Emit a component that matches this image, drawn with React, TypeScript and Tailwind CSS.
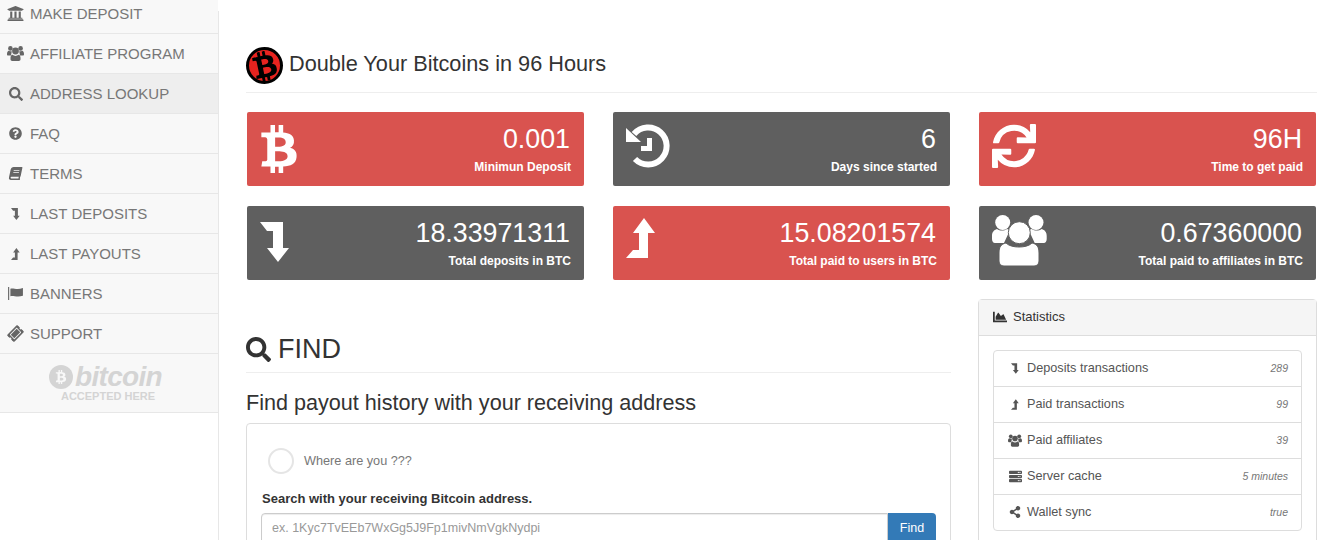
import type { ReactNode } from "react";
import {
  FaBtc,
  FaBook,
  FaChartArea,
  FaQuestionCircle,
  FaSearch,
  FaServer,
  FaShareAlt,
  FaSync,
  FaTicketAlt,
  FaUniversity,
} from "react-icons/fa";

function LevelDown({ className }: { className?: string }) {
  return (
    <svg viewBox="0 0 30 40" fill="currentColor" className={className}>
      <polygon points="0,0 23,0 23,26 29,26 18,40 7,26 13,26 13,9 7,9" />
    </svg>
  );
}

function LevelUp({ className }: { className?: string }) {
  return (
    <svg viewBox="0 0 30 40" fill="currentColor" className={className}>
      <polygon points="0,40 22,40 22,15 29,15 18,0 7,15 13,15 13,32 7,32" />
    </svg>
  );
}

function HistoryIcon({ className }: { className?: string }) {
  return (
    <svg viewBox="0 0 44 44" className={className}>
      <path d="M8 10A18.5 18.5 0 1 1 9 35" fill="none" stroke="currentColor" strokeWidth="6" />
      <polygon points="0,4 0,18 15,18" fill="currentColor" />
      <path d="M21 14h5v13H15v-5h6z" fill="currentColor" />
    </svg>
  );
}

function BigUsers({ className }: { className?: string }) {
  return (
    <svg viewBox="0 0 55 52" fill="currentColor" className={className}>
      <circle cx="10.7" cy="7.5" r="7.5" />
      <circle cx="44" cy="7.5" r="7.5" />
      <path d="M0 21c0-4 2-6 5-7 3 2 7 2 10 0l3 1-6 13H3c-2 0-3-2-3-4zM54.7 21c0-4-2-6-5-7-3 2-7 2-10 0l-3 1 6 13h9c2 0 3-2 3-4z" />
      <circle cx="27.3" cy="17.7" r="11" stroke="#5f5f5f" strokeWidth="1" />
      <path d="M7 38c0-6 2-9 7-10 3 3 8 4 13 4s10-1 13-4c5 1 7 4 7 10v8c0 3-2 5-5 5H12c-3 0-5-2-5-5z" stroke="#5f5f5f" strokeWidth="1" />
    </svg>
  );
}

function SmallUsers({ className }: { className?: string }) {
  return (
    <svg viewBox="0 0 17 15" fill="currentColor" className={className}>
      <circle cx="3.4" cy="2.4" r="2.3" />
      <circle cx="13.6" cy="2.4" r="2.3" />
      <path d="M0 8c0-2 .8-3 2-3.200 1 .6 2 .6 2.800.4L4 9.500H1C.4 9.500 0 9 0 8.500zM17 8c0-2-.8-3-2-3.200-1 .6-2 .6-2.800.4L13 9.500h3c.6 0 1-.5 1-1z" />
      <circle cx="8.500" cy="5" r="3.400" />
      <path d="M3.500 12c0-2 .7-3 2-3.200.9.8 1.900 1.100 3 1.100s2.100-.3 3-1.100c1.300.2 2 1.200 2 3.200v1.300c0 1-.7 1.700-1.700 1.700H5.200c-1 0-1.700-.7-1.700-1.700z" />
    </svg>
  );
}

function FlagIcon({ className }: { className?: string }) {
  return (
    <svg viewBox="0 0 16 14" fill="currentColor" className={className}>
      <rect x="0" y="0" width="1.200" height="14" />
      <path d="M2.500 2C5 .5 9 3.500 16 1.200V9.500C9 11.500 5 8.500 2.500 10z" />
    </svg>
  );
}

const navItems: { label: string; icon: ReactNode; active?: boolean }[] = [
  { label: "MAKE DEPOSIT", icon: <FaUniversity className="h-[17px] w-[17px]" /> },
  { label: "AFFILIATE PROGRAM", icon: <SmallUsers className="h-[15px] w-[17px]" /> },
  { label: "ADDRESS LOOKUP", icon: <FaSearch className="h-[14px] w-[14px]" />, active: true },
  { label: "FAQ", icon: <FaQuestionCircle className="h-[13px] w-[13px]" /> },
  { label: "TERMS", icon: <FaBook className="h-[13px] w-[13px] -skew-x-12" /> },
  { label: "LAST DEPOSITS", icon: <LevelDown className="h-[12px] w-[9px]" /> },
  { label: "LAST PAYOUTS", icon: <LevelUp className="h-[12px] w-[9px]" /> },
  { label: "BANNERS", icon: <FlagIcon className="h-[13px] w-[15px]" /> },
  { label: "SUPPORT", icon: <FaTicketAlt className="h-[15px] w-[15px] -rotate-45" /> },
];

function Sidebar() {
  return (
    <nav className="w-[218px] shrink-0 self-start bg-[#f8f8f8] text-[#777]">
      <ul className="-mt-[6px]">
        {navItems.map((item) => (
          <li
            key={item.label}
            className={`flex h-10 items-center border-b border-[#e7e7e7] pl-[7px] text-[15px] ${
              item.active ? "bg-[#eeeeee]" : ""
            }`}
          >
            <span className="mr-[6px] flex w-[17px] justify-center text-[#666]">{item.icon}</span>
            <span className="pt-px">{item.label}</span>
          </li>
        ))}
      </ul>
      <div className="flex h-[59px] flex-col items-center border-b border-[#e7e7e7] text-[#d4d4d4]">
        <div className="flex h-[34px] items-center pt-[11px] pr-[7px]">
          <span className="mr-[2px] flex h-[24px] w-[24px] items-center justify-center rounded-full bg-[#d4d4d4] text-[#f8f8f8]">
            <FaBtc className="h-[14px] w-[14px]" />
          </span>
          <span className="text-[28px] leading-none font-bold italic tracking-tight">bitcoin</span>
        </div>
        <span className="mt-[3px] pr-[2px] text-[11px] leading-none font-bold">ACCEPTED HERE</span>
      </div>
    </nav>
  );
}

function StatCard({
  value,
  label,
  icon,
  tone,
}: {
  value: string;
  label: string;
  icon: ReactNode;
  tone: "red" | "gray";
}) {
  return (
    <div
      className={`flex h-[74px] items-start justify-between rounded-[2px] pr-[13px] text-white ${
        tone === "red" ? "bg-[#d9534f]" : "bg-[#5f5f5f]"
      }`}
    >
      <div className="flex w-[70px] pt-[12px] pl-[13px]">{icon}</div>
      <div className="flex flex-col items-end">
        <span className="mt-[11px] pr-px text-[26.8px] leading-[32px]">{value}</span>
        <span className="mt-[5px] text-xs leading-[14px] font-bold">{label}</span>
      </div>
    </div>
  );
}

const statRows: { label: string; value: string; icon: ReactNode }[] = [
  { label: "Deposits transactions", value: "289", icon: <LevelDown className="h-[11px] w-[8px]" /> },
  { label: "Paid transactions", value: "99", icon: <LevelUp className="h-[11px] w-[8px]" /> },
  { label: "Paid affiliates", value: "39", icon: <SmallUsers className="h-[13px] w-[14px]" /> },
  { label: "Server cache", value: "5 minutes", icon: <FaServer className="h-[13px] w-[13px]" /> },
  { label: "Wallet sync", value: "true", icon: <FaShareAlt className="h-[12px] w-[12px]" /> },
];

function StatisticsPanel() {
  return (
    <div className="mt-[19px] w-[339px] shrink-0 rounded-[4px] border border-[#dddddd]">
      <div className="flex h-[36px] items-center border-b border-[#dddddd] bg-[#f5f5f5] pb-px pl-[14px] text-[13px] text-[#333]">
        <FaChartArea className="mr-[6px] h-[14px] w-[14px]" />
        Statistics
      </div>
      <div className="p-[14px]">
        <ul className="rounded-[4px] border border-[#dddddd]">
          {statRows.map((row) => (
            <li
              key={row.label}
              className="flex h-[36px] items-center justify-between border-b border-[#dddddd] pr-[13px] pl-[14px] text-[12.7px] text-[#555] last:h-[35px] last:border-b-0"
            >
              <span className="flex items-center">
                <span className="mr-[5px] flex w-[14px] justify-center">{row.icon}</span>
                {row.label}
              </span>
              <span className="text-[10.5px] text-[#777] italic">{row.value}</span>
            </li>
          ))}
        </ul>
      </div>
    </div>
  );
}

function FindSection() {
  return (
    <div className="w-[705px] shrink-0 text-[#333]">
      <div className="mt-[48px] flex h-[45px] items-center border-b border-[#eeeeee] pb-[2px] text-[27px]">
        <FaSearch className="mr-[7px] h-[25px] w-[25px]" />
        FIND
      </div>
      <h3 className="mt-[15px] text-[21.6px] leading-[29px]">Find payout history with your receiving address</h3>
      <div className="mt-[6px] h-[200px] rounded-[4px] border border-[#dddddd] px-[14px]">
        <div className="flex items-center pt-[24px] pl-[7px]">
          <span className="mr-[10px] h-[26px] w-[26px] rounded-full border-2 border-[#e5e5e5]" />
          <span className="pt-px text-[12.7px] text-[#777]">Where are you ???</span>
        </div>
        <label className="mt-[17px] block pl-px text-[13px] leading-[16px] font-bold">
          Search with your receiving Bitcoin address.
        </label>
        <div className="mt-[6px] flex h-[34px]">
          <input
            readOnly
            placeholder="ex. 1Kyc7TvEEb7WxGg5J9Fp1mivNmVgkNydpi"
            className="min-w-0 flex-1 rounded-l-[4px] border border-[#cccccc] px-[10px] pb-[4px] text-[12.5px] shadow-[inset_0_1px_1px_rgba(0,0,0,0.075)] outline-none placeholder:text-[#999]"
          />
          <button type="button" className="w-[48px] rounded-r-[4px] bg-[#337ab7] pb-[4px] text-[12.5px] text-white">
            Find
          </button>
        </div>
      </div>
    </div>
  );
}

export default function App() {
  return (
    <div className="flex h-[540px] overflow-hidden bg-white font-['Liberation_Sans',Arial,sans-serif]">
      <Sidebar />
      <div className="mt-[11px] w-px shrink-0 bg-[#e7e7e7]" />
      <main className="ml-[27px] w-[1071px] shrink-0">
        <div className="mt-[47px] flex items-center border-b border-[#eeeeee] pb-[8px] text-[21.7px] text-[#333]">
          <span className="mr-[6px] flex h-[37px] w-[37px] items-center justify-center rounded-full border-[3px] border-black bg-[#e8231f] text-black">
            <FaBtc className="h-[30px] w-[30px] -rotate-12" />
          </span>
          <span className="-mt-[3px]">Double Your Bitcoins in 96 Hours</span>
        </div>
        <div className="mt-[19px] grid grid-cols-3 gap-x-[29px] gap-y-[20px] px-px">
          <StatCard tone="red" value="0.001" label="Minimun Deposit" icon={<FaBtc className="-ml-[5px] mt-px h-[48px] w-[48px]" />} />
          <StatCard tone="gray" value="6" label="Days since started" icon={<HistoryIcon className="h-[44px] w-[44px]" />} />
          <StatCard tone="red" value="96H" label="Time to get paid" icon={<FaSync className="h-[44px] w-[44px]" />} />
          <StatCard tone="gray" value="18.33971311" label="Total deposits in BTC" icon={<LevelDown className="mt-[4px] h-[40px] w-[30px]" />} />
          <StatCard tone="red" value="15.08201574" label="Total paid to users in BTC" icon={<LevelUp className="h-[40px] w-[30px]" />} />
          <StatCard tone="gray" value="0.67360000" label="Total paid to affiliates in BTC" icon={<BigUsers className="-mt-[3px] h-[52px] w-[55px]" />} />
        </div>
        <div className="flex justify-between">
          <FindSection />
          <StatisticsPanel />
        </div>
      </main>
    </div>
  );
}
